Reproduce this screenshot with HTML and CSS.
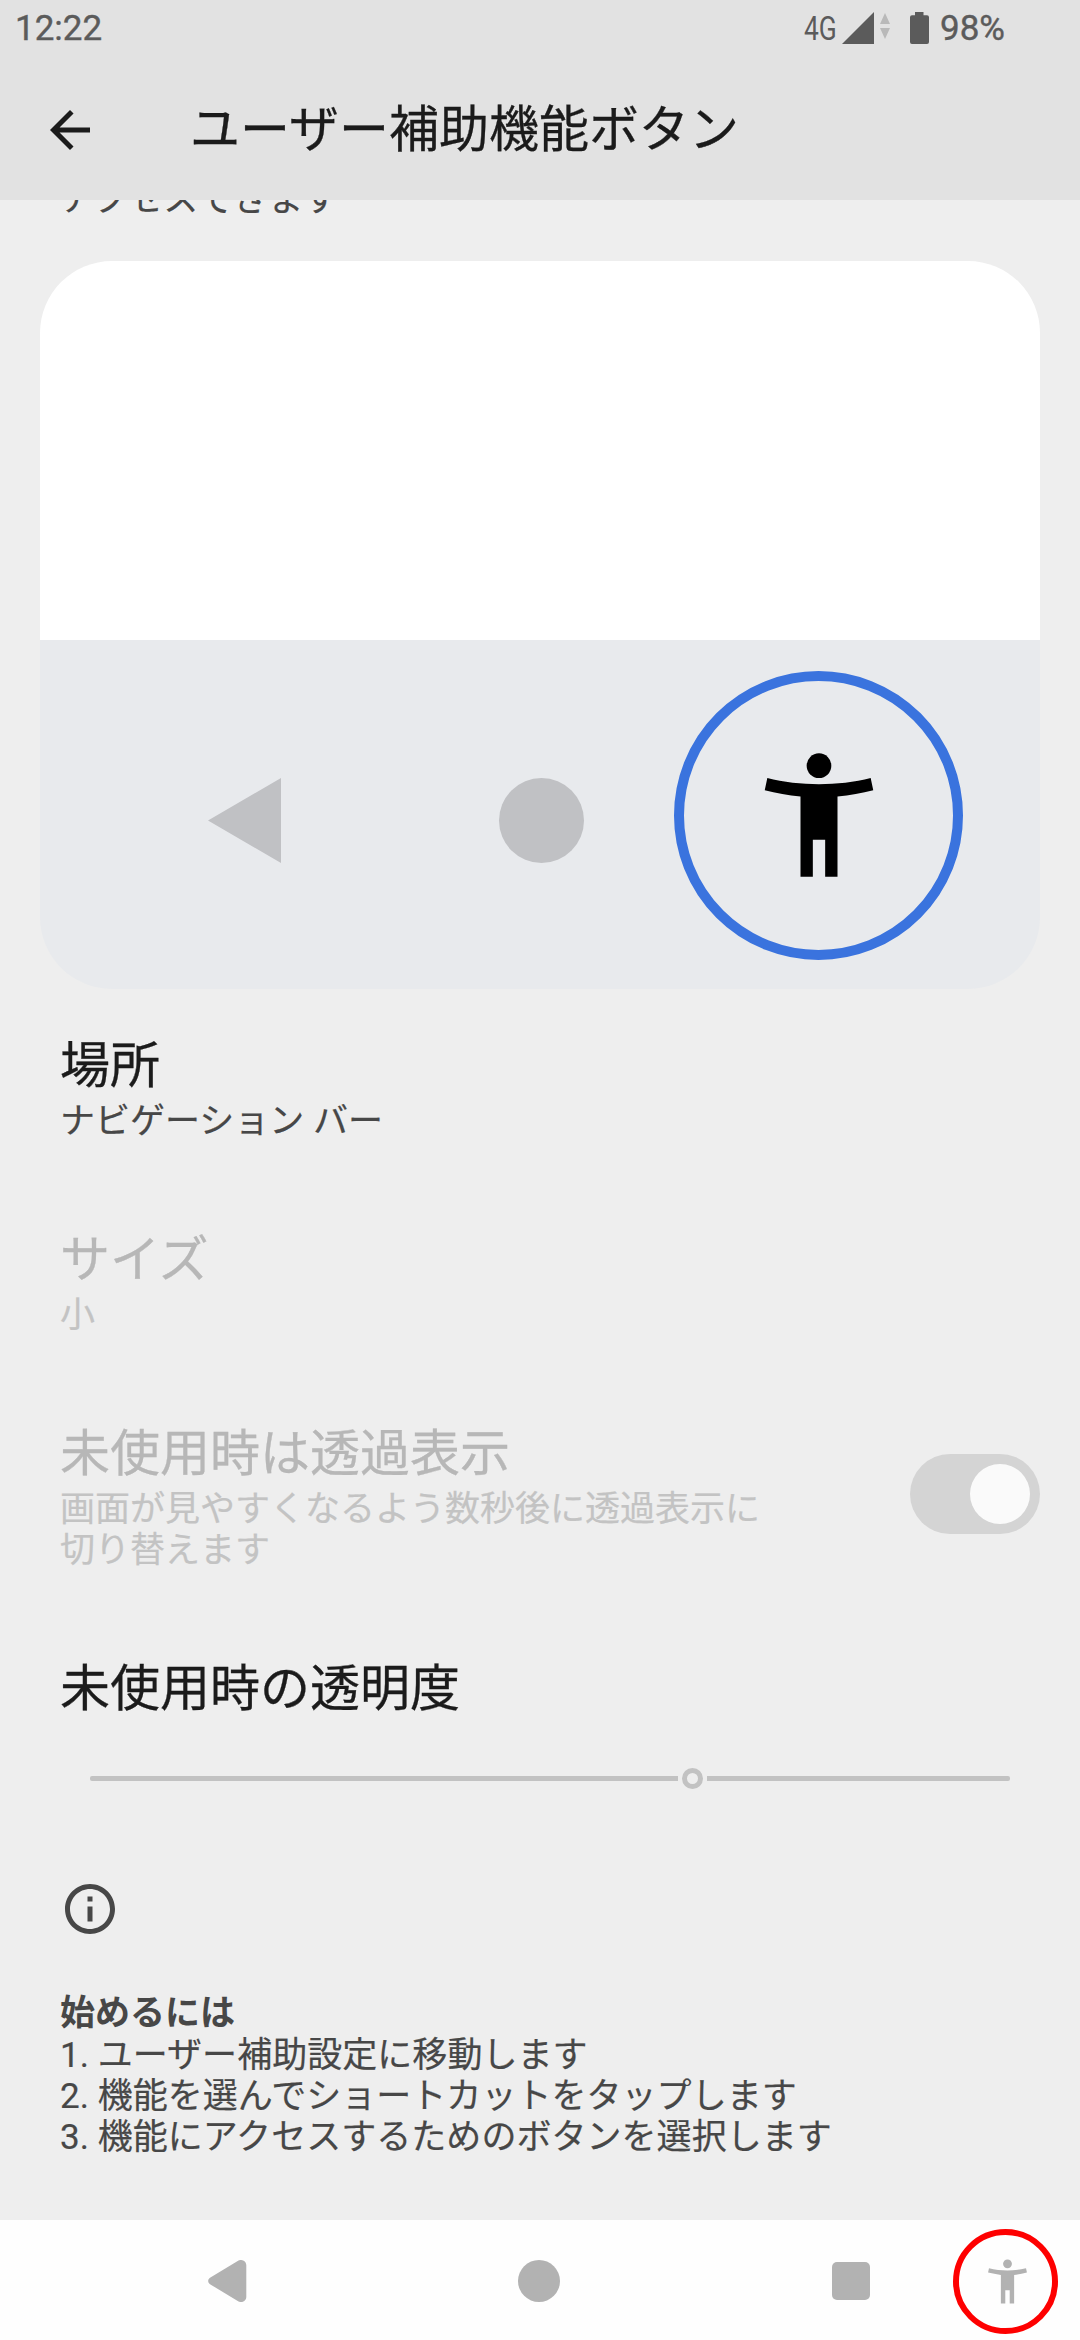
FILE: index.html
```html
<!DOCTYPE html>
<html lang="ja">
<head>
<meta charset="utf-8">
<title>ユーザー補助機能ボタン</title>
<link rel="stylesheet" href="styles.css">
</head>
<body>
<svg class="defs" width="0" height="0" aria-hidden="true">
  <symbol id="person" viewBox="0 0 24 24">
    <circle cx="12" cy="4" r="2"/>
    <path d="M20.38 6C17.8 6.7 14.8 7 12 7s-5.8-.3-8.38-1L3.2 7.98C5.05 8.45 7 8.83 9 9v13h2v-6h2v6h2V9c2-.17 3.95-.55 5.8-1.02z"/>
  </symbol>
</svg>
<div class="screen">
  <header class="header">
    <div class="status">
      <span class="clock">12:22</span>
      <div class="indicators">
        <span class="network">4G</span>
        <svg class="signal" width="32" height="32" viewBox="0 0 32 32"><path d="M32 0v32H0z"/></svg>
        <svg class="traffic" width="10" height="26" viewBox="0 0 10 26"><path d="M5 0l5 11H0zM0 15h10L5 26z"/></svg>
        <svg class="battery" width="19" height="32" viewBox="0 0 19 32"><path d="M5 0h8.500v3.300h3.500a2 2 0 0 1 2 2V30a2 2 0 0 1-2 2H2a2 2 0 0 1-2-2V5.300a2 2 0 0 1 2-2h3z"/></svg>
        <span class="percent">98%</span>
      </div>
    </div>
    <div class="appbar">
      <svg class="back" width="60" height="60" viewBox="0 0 24 24"><path d="M20 11H7.830l5.590-5.590L12 4l-8 8 8 8 1.410-1.410L7.830 13H20z"/></svg>
      <h1 class="title">ユーザー補助機能ボタン</h1>
    </div>
  </header>

  <main class="content">
    <p class="intro">アクセスできます</p>
    <div class="preview">
      <div class="preview-page"></div>
      <div class="preview-nav">
        <svg class="preview-back" width="73" height="85" viewBox="0 0 73 85"><path d="M73 0v85L0 42.500z"/></svg>
        <div class="preview-home"></div>
        <div class="preview-ring"><svg width="148" height="148"><use href="#person"/></svg></div>
      </div>
    </div>

    <section class="row">
      <div><h2 class="name">場所</h2><p class="summary">ナビゲーション バー</p></div>
    </section>
    <section class="row disabled">
      <div><h2 class="name">サイズ</h2><p class="summary">小</p></div>
    </section>
    <section class="row disabled">
      <div><h2 class="name">未使用時は透過表示</h2><p class="summary">画面が見やすくなるよう数秒後に透過表示に<br>切り替えます</p></div>
      <div class="toggle"><div class="knob"></div></div>
    </section>
    <section class="opacity">
      <h2 class="name">未使用時の透明度</h2>
      <div class="slider"><div class="track filled"></div><div class="thumb"></div><div class="track"></div></div>
    </section>

    <section class="help">
      <svg class="info" width="60" height="60" viewBox="0 0 24 24"><path d="M11 7h2v2h-2zm0 4h2v6h-2zm1-9C6.480 2 2 6.480 2 12s4.480 10 10 10 10-4.480 10-10S17.520 2 12 2zm0 18c-4.410 0-8-3.590-8-8s3.590-8 8-8 8 3.590 8 8-3.590 8-8 8z"/></svg>
      <h3 class="help-title">始めるには</h3>
      <p class="steps">1. ユーザー補助設定に移動します<br>2. 機能を選んでショートカットをタップします<br>3. 機能にアクセスするためのボタンを選択します</p>
    </section>
  </main>

  <nav class="navbar">
    <svg class="nav-back" width="39" height="42" viewBox="0 0 39 42"><path d="M2 17.800 29.700.9C33.300-1.300 38.300.6 38.300 5.300v31.400c0 4.700-5 6.600-8.600 4.400L2 24.200c-2.400-1.500-2.400-4.900 0-6.400z"/></svg>
    <div class="nav-home"></div>
    <div class="nav-recent"></div>
    <div class="nav-access"><svg width="53" height="53"><use href="#person"/></svg></div>
  </nav>
</div>
</body>
</html>
```
FILE: styles.css
```css
* { box-sizing: border-box; margin: 0; padding: 0; }
body {
  width: 1080px;
  background: #eee;
  color: #1b1b1b;
  font-family: Roboto, "Noto Sans CJK JP", sans-serif;
}
svg { display: block; flex: none; }
.defs { position: absolute; }
.screen { display: flex; flex-direction: column; height: 2340px; overflow: hidden; }

.header { height: 200px; flex: none; background: #e2e2e2; }
.status {
  display: flex;
  justify-content: space-between;
  height: 60px;
  padding: 0 75px 0 15px;
  color: #5b5b5b;
  fill: #5b5b5b;
  font-size: 35px;
  line-height: 57px;
}
.clock, .percent { -webkit-text-stroke: 0.4px #5b5b5b; }
.indicators { display: flex; height: 56px; align-items: center; }
.network { width: 38px; font-size: 33px; transform: scaleX(0.8); transform-origin: left; }
.traffic { margin: 0 20px 4px 6px; fill: #b9b9b9; }
.percent { width: 65px; margin-left: 11px; }
.appbar { display: flex; align-items: center; height: 140px; padding-left: 40px; }
.back { fill: #1b1b1b; }
.title { margin-left: 90px; font-size: 50px; font-weight: 400; line-height: 70px; -webkit-text-stroke: 0.3px; }

.content { flex: 1; overflow: hidden; }
.intro { margin: -21px 0 41px 60px; font-size: 35px; line-height: 41px; color: #474747; -webkit-text-stroke: 0.2px; }
.preview {
  display: flex;
  flex-direction: column;
  height: 728px;
  margin: 0 40px;
  border-radius: 72px;
  overflow: hidden;
}
.preview-page { height: 379px; background: #fff; }
.preview-nav { display: flex; flex: 1; padding-left: 168px; background: #e8eaed; }
.preview-back { margin-top: 138px; fill: #c0c1c4; }
.preview-home { width: 85px; height: 85px; margin: 138px 0 0 218px; border-radius: 50%; background: #c0c1c4; }
.preview-ring {
  display: flex;
  justify-content: center;
  width: 289px;
  height: 289px;
  margin: 31px 0 0 90px;
  padding-top: 60px;
  border: 10px solid #3a73de;
  border-radius: 50%;
}

.row { display: flex; justify-content: space-between; align-items: center; padding: 42px 40px 41px 60px; }
.name { font-size: 50px; font-weight: 400; line-height: 70px; -webkit-text-stroke: 0.3px; }
.summary { font-size: 35px; line-height: 41px; color: #474747; -webkit-text-stroke: 0.2px; }
.disabled .name { color: #b7b7b7; }
.disabled .summary { color: #c3c3c3; }
.toggle {
  display: flex;
  justify-content: flex-end;
  width: 130px;
  height: 80px;
  margin-bottom: 2px;
  padding: 10px;
  border-radius: 40px;
  background: #d4d4d4;
}
.knob { width: 60px; height: 60px; border-radius: 50%; background: #fafafa; }

.opacity { padding: 42px 60px 0; }
.slider { display: flex; align-items: center; margin: 44px 10px 0 30px; }
.track { width: 303px; height: 5px; border-radius: 0 2px 2px 0; background: #c2c2c2; }
.filled { width: 588px; border-radius: 2px 0 0 2px; }
.thumb { width: 21px; height: 21px; margin: 0 4px; border: 5px solid #c2c2c2; border-radius: 50%; }

.help { padding: 90px 60px 0; color: #474747; font-size: 35px; line-height: 41px; }
.info { fill: #474747; }
.help-title { margin-top: 54px; font-size: 35px; font-weight: 700; }
.steps { margin-top: 1px; letter-spacing: 0.04px; -webkit-text-stroke: 0.2px; }

.navbar { display: flex; align-items: center; height: 120px; padding: 2px 0 0 208px; flex: none; background: #fefefe; fill: #b2b2b2; }
.nav-home { width: 42px; height: 42px; margin-left: 271px; border-radius: 50%; background: #b2b2b2; }
.nav-recent { width: 38px; height: 38px; margin-left: 272px; border-radius: 5px; background: #b2b2b2; }
.nav-access {
  display: flex;
  justify-content: center;
  width: 105px;
  height: 105px;
  margin-left: 83px;
  padding: 20px 0 0 4px;
  border: 6px solid #fe0000;
  border-radius: 50%;
}
```
